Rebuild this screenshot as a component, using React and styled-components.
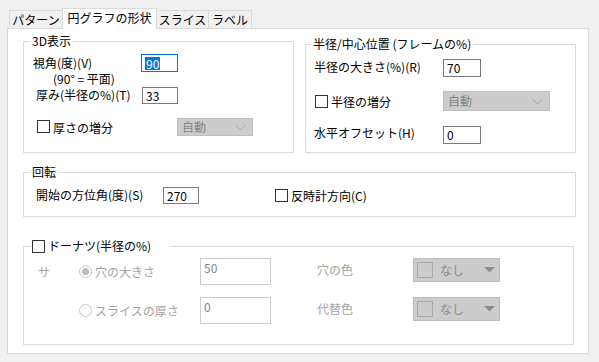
import React from 'react';
import styled, { createGlobalStyle } from 'styled-components';

const Global = createGlobalStyle`
  html, body { margin: 0; padding: 0; background: #f0f0f0; }
  body { font-family: "Noto Sans CJK JP", "Noto Sans", sans-serif; font-size: 12px; color: #000; }
  * { box-sizing: border-box; }
`;

const Window = styled.div`
  width: 599px;
  height: 362px;
  background: #f0f0f0;
  padding-left: 7px;
  overflow: hidden;
`;

const TabStrip = styled.div`
  display: flex;
  align-items: flex-end;
  height: 28px;
  padding-left: 3px;
`;

const Tab = styled.div`
  position: relative;
  width: ${p => p.$w}px;
  height: ${p => (p.$active ? 21 : 18)}px;
  margin-left: -1px;
  margin-bottom: ${p => (p.$active ? -1 : 0)}px;
  z-index: ${p => (p.$active ? 2 : 1)};
  border: 1px solid #d9d9d9;
  border-bottom: none;
  background: ${p => (p.$active ? '#fff' : '#f0f0f0')};
  display: flex;
  align-items: center;
  justify-content: center;
  line-height: 14px;
  padding-bottom: ${p => (p.$active ? 2 : 0)}px;
  white-space: nowrap;
`;

const Panel = styled.div`
  position: relative;
  width: 582px;
  height: 326px;
  border: 1px solid #d9d9d9;
  background: #fff;
  padding: 12px 0 0 15px;
  display: flex;
  flex-direction: column;
`;

const TopRow = styled.div`
  display: flex;
  gap: 11px;
`;

const Group = styled.div`
  position: relative;
  width: ${p => p.$w}px;
  height: ${p => p.$h}px;
  margin-top: ${p => p.$mt || 0}px;
  border: 1px solid #dcdcdc;
  flex: none;
`;

const Title = styled.div`
  position: absolute;
  top: -8px;
  left: ${p => p.$left ?? 6}px;
  ${p => (p.$w ? `width: ${p.$w}px;` : '')}
  height: 14px;
  line-height: 14px;
  padding: 0 ${p => p.$pr ?? 2}px 0 ${p => p.$pl ?? 2}px;
  background: #fff;
  display: flex;
  align-items: center;
  white-space: nowrap;
`;

const Body = styled.div`
  display: flex;
  flex-direction: column;
  padding-top: ${p => p.$pt}px;
  padding-left: ${p => p.$pl}px;
`;

const Row = styled.div`
  display: flex;
  align-items: center;
  height: ${p => p.$h}px;
  margin-top: ${p => p.$mt || 0}px;
  margin-left: ${p => p.$ml || 0}px;
`;

const Label = styled.div`
  width: ${p => p.$w}px;
  flex: none;
  margin-left: ${p => p.$ml || 0}px;
  padding-bottom: ${p => (p.$up || 0) * 2}px;
  line-height: 14px;
  white-space: nowrap;
  color: ${p => (p.$disabled ? '#a3a3a3' : '#000')};
`;

const SubLabel = styled.div`
  height: 14px;
  line-height: 14px;
  margin-left: 20px;
  white-space: nowrap;
`;

const TextBox = styled.div`
  width: ${p => p.$w}px;
  height: ${p => p.$h}px;
  flex: none;
  border: 1px solid ${p => (p.$focus ? '#0078d7' : p.$disabled ? '#cccccc' : '#7a7a7a')};
  background: #fff;
  display: flex;
  align-items: ${p => (p.$disabled ? 'flex-start' : 'center')};
  padding: ${p => (p.$disabled ? '2px 0 0 3px' : '0 0 0 3px')};
  line-height: 14px;
  color: ${p => (p.$disabled ? '#838383' : '#000')};
  margin-left: ${p => p.$ml || 0}px;
`;

const Selected = styled.span`
  background: #0078d7;
  color: #fff;
  padding: 0 1px;
  line-height: 13px;
`;

const CheckGroup = styled.div`
  display: flex;
  align-items: center;
  gap: 3px;
  width: ${p => (p.$w ? `${p.$w}px` : 'auto')};
  flex: none;
  margin-left: ${p => p.$ml || 0}px;
  white-space: nowrap;
  color: ${p => (p.$disabled ? '#a3a3a3' : '#000')};
`;

const Box = styled.span`
  width: 13px;
  height: 13px;
  flex: none;
  border: 1px solid #333;
  background: #fff;
  margin-bottom: ${p => (p.$up || 0) * 2}px;
`;

const Radio = styled.span`
  width: 13px;
  height: 13px;
  flex: none;
  border-radius: 50%;
  border: 1px solid #c6c6c6;
  background: #fff;
  display: flex;
  align-items: center;
  justify-content: center;
  &::after {
    content: '';
    width: 7px;
    height: 7px;
    border-radius: 50%;
    background: ${p => (p.$checked ? '#bcbcbc' : 'transparent')};
  }
`;

const Select = styled.div`
  width: ${p => p.$w}px;
  height: ${p => p.$h}px;
  flex: none;
  background: #cccccc;
  border: 1px solid #bfbfbf;
  display: flex;
  align-items: center;
  justify-content: space-between;
  padding: 0 6px 0 4px;
  color: #838383;
  line-height: 14px;
`;

const ColorSelect = styled.div`
  width: ${p => p.$w}px;
  height: ${p => p.$h}px;
  flex: none;
  background: #cccccc;
  border: 1px solid #bcbcbc;
  display: flex;
  align-items: center;
  padding: 0 4px 0 3px;
  color: #8a8a8a;
  line-height: 14px;
`;

const Swatch = styled.span`
  width: 16px;
  height: 16px;
  flex: none;
  border: 1px solid #a8a8a8;
  background: #cccccc;
  margin-right: 7px;
`;

const Spacer = styled.span`
  flex: 1;
`;

const DonutRow = styled.div`
  display: flex;
  align-items: center;
  height: 27px;
  margin-top: ${p => p.$mt || 0}px;
`;

const Stub = styled.div`
  width: 41px;
  flex: none;
  color: #a3a3a3;
  line-height: 14px;
`;

const RadioGroup = styled.div`
  display: flex;
  align-items: center;
  gap: 3px;
  width: 121px;
  flex: none;
  color: #a3a3a3;
  white-space: nowrap;
`;

const ColorPair = styled.div`
  display: flex;
  align-items: center;
  align-self: flex-start;
  height: 24px;
  margin-left: 46px;
`;

const Chevron = () => (
  <svg width="11" height="7" viewBox="0 0 11 7">
    <path d="M0.5 1 L5.5 6 L10.5 1" fill="none" stroke="#a6a6a6" strokeWidth="1" />
  </svg>
);

const Tri = () => (
  <svg width="11" height="6" viewBox="0 0 11 6">
    <path d="M0 0 H11 L5.5 5.5 Z" fill="#8c8c8c" />
  </svg>
);

export default function App() {
  return (
    <>
      <Global />
      <Window>
        <TabStrip>
          <Tab $w={54}>パターン</Tab>
          <Tab $w={95} $active>円グラフの形状</Tab>
          <Tab $w={53}>スライス</Tab>
          <Tab $w={44}>ラベル</Tab>
        </TabStrip>
        <Panel>
          <TopRow>
            <Group $w={271} $h={112}>
              <Title>3D表示</Title>
              <Body $pt={12} $pl={9}>
                <Row $h={18}>
                  <Label $w={108}>視角(度)(V)</Label>
                  <TextBox $w={37} $h={18} $focus>
                    <Selected>90</Selected>
                  </TextBox>
                </Row>
                <SubLabel>(90° = 平面)</SubLabel>
                <Row $h={17} $mt={1}>
                  <Label $w={106} $ml={3} $up={1}>厚み(半径の%)(T)</Label>
                  <TextBox $w={36} $h={17}>33</TextBox>
                </Row>
                <Row $h={18} $mt={14} $ml={4}>
                  <CheckGroup $w={140}>
                    <Box $up={1} />
                    <span>厚さの増分</span>
                  </CheckGroup>
                  <Select $w={76} $h={18}>
                    <span>自動</span>
                    <Chevron />
                  </Select>
                </Row>
              </Body>
            </Group>
            <Group $w={271} $h={109} $mt={3}>
              <Title $left={5}>半径/中心位置 (フレームの%)</Title>
              <Body $pt={14} $pl={8}>
                <Row $h={18}>
                  <Label $w={129} $up={1}>半径の大きさ(%)(R)</Label>
                  <TextBox $w={38} $h={18}>70</TextBox>
                </Row>
                <Row $h={20} $mt={14}>
                  <CheckGroup $w={128} $ml={1}>
                    <Box />
                    <span>半径の増分</span>
                  </CheckGroup>
                  <Select $w={107} $h={20}>
                    <span>自動</span>
                    <Chevron />
                  </Select>
                </Row>
                <Row $h={18} $mt={15}>
                  <Label $w={129} $up={2}>水平オフセット(H)</Label>
                  <TextBox $w={38} $h={18}>0</TextBox>
                </Row>
              </Body>
            </Group>
          </TopRow>

          <Group $w={553} $h={45} $mt={19}>
            <Title>回転</Title>
            <Body $pt={14} $pl={12}>
              <Row $h={17}>
                <Label $w={127} $up={1}>開始の方位角(度)(S)</Label>
                <TextBox $w={36} $h={17}>270</TextBox>
                <CheckGroup $ml={76}>
                  <Box />
                  <span>反時計方向(C)</span>
                </CheckGroup>
              </Row>
            </Body>
          </Group>

          <Group $w={551} $h={99} $mt={29}>
            <Title $left={7} $pl={1} $pr={0} $w={139}>
              <CheckGroup $ml={0}>
                <Box />
                <span>ドーナツ(半径の%)</span>
              </CheckGroup>
            </Title>
            <Body $pt={11} $pl={14}>
              <DonutRow>
                <Stub>サ</Stub>
                <RadioGroup>
                  <Radio $checked />
                  <span>穴の大きさ</span>
                </RadioGroup>
                <TextBox $w={71} $h={27} $disabled>50</TextBox>
                <ColorPair>
                  <Label $w={96} $disabled>穴の色</Label>
                  <ColorSelect $w={87} $h={24}>
                    <Swatch />
                    <span>なし</span>
                    <Spacer />
                    <Tri />
                  </ColorSelect>
                </ColorPair>
              </DonutRow>
              <DonutRow $mt={12}>
                <Stub />
                <RadioGroup>
                  <Radio />
                  <span>スライスの厚さ</span>
                </RadioGroup>
                <TextBox $w={71} $h={27} $disabled>0</TextBox>
                <ColorPair>
                  <Label $w={96} $disabled>代替色</Label>
                  <ColorSelect $w={87} $h={24}>
                    <Swatch />
                    <span>なし</span>
                    <Spacer />
                    <Tri />
                  </ColorSelect>
                </ColorPair>
              </DonutRow>
            </Body>
          </Group>
        </Panel>
      </Window>
    </>
  );
}
